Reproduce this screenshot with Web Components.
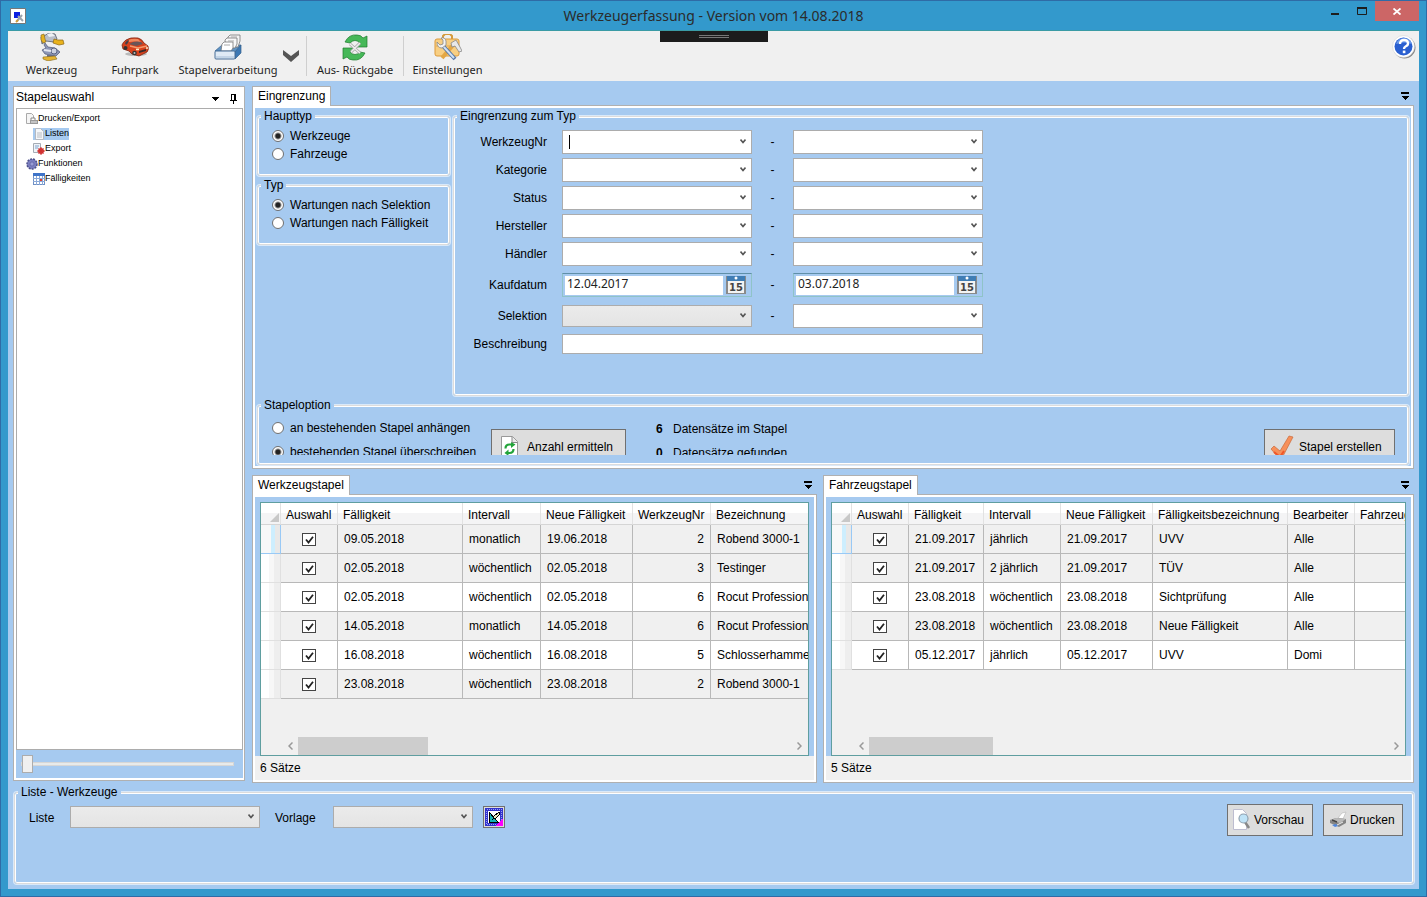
<!DOCTYPE html>
<html lang="de">
<head>
<meta charset="utf-8">
<title>Werkzeugerfassung</title>
<style>
  html, body { margin: 0; min-height: 100%; }
  body { font: 12px/14px "Liberation Sans", Arial, sans-serif; color: #000; background: #3399cc; }
  .main { flex: 1; display: grid; grid-template-columns: 232px minmax(0, 1fr); gap: 7px; }
  .side { margin-bottom: 2px; }
  .right { display: flex; flex-direction: column; gap: 6px; min-width: 0; }
  .stacks { flex: 1; display: grid; grid-template-columns: minmax(0, 565fr) minmax(0, 591fr); gap: 6px; }
  .filter { display: flex; flex-direction: column; gap: 2px; padding: 1px 2px 1px 2px; }
  .filter-top { display: grid; grid-template-columns: 193px minmax(0, 1fr); gap: 3px; }
  .types { display: flex; flex-direction: column; gap: 2px; }
  .types group-box { --pad: 4px 14px 12px; }
  .criteria { --pad: 7px 0 39px 2px; }
  .option { --pad: 0 0 9px 14px; }
  .list { --pad: 5px 10px 47px 14px; margin: 2px 0 0 1px; }
</style>
</head>
<body>
<app-window caption="Werkzeugerfassung - Version vom 14.08.2018">
  <tool-bar slot="toolbar"></tool-bar>
  <div class="main">
    <stack-tree class="side"></stack-tree>
    <div class="right">
      <dock-panel caption="Eingrenzung">
        <div class="filter">
          <div class="filter-top">
            <div class="types">
              <group-box caption="Haupttyp"><radio-set name="haupttyp" options="Werkzeuge|Fahrzeuge" selected="0"></radio-set></group-box>
              <group-box caption="Typ"><radio-set name="typ" options="Wartungen nach Selektion|Wartungen nach Fälligkeit" selected="0"></radio-set></group-box>
            </div>
            <group-box class="criteria" caption="Eingrenzung zum Typ"><criteria-form></criteria-form></group-box>
          </div>
          <group-box class="option" caption="Stapeloption"><stack-options></stack-options></group-box>
        </div>
      </dock-panel>
      <div class="stacks">
        <dock-panel caption="Werkzeugstapel"><data-grid source="tools"></data-grid></dock-panel>
        <dock-panel caption="Fahrzeugstapel"><data-grid source="vehicles"></data-grid></dock-panel>
      </div>
    </div>
  </div>
  <group-box class="list" caption="Liste - Werkzeuge"><list-actions></list-actions></group-box>
</app-window>

<script>
const ICONS = {
  app: `<svg width="16" height="16" viewBox="0 0 16 16"><path d="M.5.5h15v15H.5z" fill="#fff" stroke="#777"/><path d="M4 4h6v4H8v2H4z" fill="#0a1ee0"/><path d="M7 13l5-6M8 8l5 5" stroke="#9aa3ad" stroke-width="2"/><path d="M6 14l2-2" stroke="#d29a35" stroke-width="2"/></svg>`,
  drill: `<svg width="28" height="28" viewBox="0 0 28 28"><path d="M6 3l5-3 6 1 2 5-3 3-8-1-4 3-1-7z" fill="#b9bec9" stroke="#555c6b" stroke-width=".8"/><path d="M3 2l3-1 1 5 1 3-3 1-2-3z" fill="#e7b321" stroke="#7d6320" stroke-width=".6"/><path d="M9 1l5-1 3 3-6 1z" fill="#eef1f5"/><path d="M16 6l4 1 5 0 1 4-5 1-6-2z" fill="#e9b21c" stroke="#8b6515" stroke-width=".7"/><path d="M7 10l3 4 7 1 5 4-4 4-11-2-3-4 4-2-2-3z" fill="#8e98b8" stroke="#4f5875" stroke-width=".7"/><circle cx="16" cy="18" r="3" fill="#cdd2e2" stroke="#5b6483"/><path d="M6 17l7 1" stroke="#e3e6f0" stroke-width="2"/><path d="M9 22h7v2h-7z" fill="#687090"/><path d="M5 24l12-1 2 3-9 2-5-2z" fill="#e5b331" stroke="#856820" stroke-width=".6"/></svg>`,
  car: `<svg width="28" height="20" viewBox="0 0 28 20"><ellipse cx="15" cy="17" rx="11" ry="2" fill="#b9b9b9"/><path d="M1 8q1-3 4-5 4-3 12-2 4 1 6 5l4 3q1 4-1 6l-8 4-7-2-3-3-6-2z" fill="#d8421d" stroke="#7c2412" stroke-width=".8"/><path d="M7 3q5-2 10-1l3 3q-7-1-12 0z" fill="#f0895f"/><path d="M8 7l4-2q4-1 8 0l2 2-7 2z" fill="#6a5558"/><path d="M4 6q2-3 4-3l-1 3-2 2z" fill="#44404a"/><path d="M9 9l8 2 9-2" stroke="#f59a6c" stroke-width="1.500" fill="none"/><path d="M18 14l7-2v2l-7 2z" fill="#3a2a2a"/><circle cx="4.500" cy="11" r="2" fill="#333"/><circle cx="13.500" cy="16" r="2.300" fill="#333"/><circle cx="13.500" cy="16" r="1" fill="#bbb"/><path d="M15 12.500l3 0M25 11l2 0" stroke="#ffe9c7" stroke-width="1.500"/></svg>`,
  tray: `<svg width="28" height="27" viewBox="0 0 28 27"><path d="M1 17l7-6h19l-6 7z" fill="#5f93c4" stroke="#3a6490" stroke-width=".7"/><path d="M21 18l6-7v8l-6 6z" fill="#3c78b4" stroke="#38638c" stroke-width=".7"/><path d="M14 3l2-2h10v6l-2 6H13z" fill="#f4f4f4" stroke="#777" stroke-width=".8"/><path d="M11 6l2-2h10v6l-2 4h-9z" fill="#f8f8f8" stroke="#777" stroke-width=".8"/><path d="M8 10l2-2h9v6l-2 3H7z" fill="#fff" stroke="#777" stroke-width=".8"/><path d="M10 11h6M14 7h6M17 3h6" stroke="#aaa"/><rect x="1" y="17" width="20" height="8" rx="1" fill="#dfeaf5" stroke="#466d96"/><path d="M2 23h18" stroke="#a7bfd8"/></svg>`,
  chevron: `<svg width="16" height="12" viewBox="0 0 16 12"><path d="M0 0l8 6 8-6v5l-8 7-8-7z" fill="#555"/></svg>`,
  exchange: `<svg width="26" height="27" viewBox="0 0 26 27"><path d="M3 8Q7 0 15 1q4 0 6 3l4-2v11H14l4-4q-5-5-10 0z" fill="#46b858" stroke="#1d7a2d" stroke-width=".7"/><path d="M23 19q-4 8-12 7-4 0-6-3l-4 2V14h11l-4 4q5 5 10 0z" fill="#46b858" stroke="#1d7a2d" stroke-width=".7"/><path d="M8 10l10 9M18 9L9 18" stroke="#a5a5a5" stroke-width="3"/><path d="M8 10l10 9M18 9L9 18" stroke="#eee" stroke-width="1.500"/></svg>`,
  toolbox: `<svg width="28" height="27" viewBox="0 0 28 27"><path d="M9 5V2l2-2h5l2 2v3" fill="none" stroke="#d59a3c" stroke-width="2"/><rect x="1" y="5" width="24" height="17" rx="2" fill="#f8cf83" stroke="#dc9a3b"/><path d="M2 12h22" stroke="#e1a750"/><path d="M8 24l12-14" stroke="#e3a744" stroke-width="4"/><path d="M17 9l5-3 4 7 2 4-3 1-4-6-3 1z" fill="#e8e8e8" stroke="#888" stroke-width=".8"/><path d="M9 12l12 13" stroke="#5577a8" stroke-width="4"/><path d="M9 12l11 12" stroke="#cfe0f4" stroke-width="2"/><path d="M3 8l3 3 3-1V6L7 4q4-1 5 3v4l-4 3q-5 0-5-6z" fill="#f2f2f2" stroke="#888" stroke-width=".8"/></svg>`,
  help: `<svg width="24" height="24" viewBox="0 0 24 24"><circle cx="12.500" cy="12.500" r="11" fill="#888"/><circle cx="11.500" cy="11.500" r="11" fill="#fff" stroke="#ccc" stroke-width=".5"/><circle cx="11.500" cy="11.500" r="9" fill="#2a5fd0"/><path d="M4 9q2-6 8-6 6 0 8 6-8-3-16 0z" fill="#6c9bea"/><path d="M8 9q0-4 4-4t4 3.500q0 2-2.500 3-1.500.700-1.500 2.500" fill="none" stroke="#fff" stroke-width="2.400"/><rect x="10.800" y="15.600" width="2.600" height="2.600" fill="#fff"/></svg>`,
  options: `<svg width="8" height="8" viewBox="0 0 8 8" shape-rendering="crispEdges"><path d="M0 0h8v2H0zM0 4h8L4 8z"/></svg>`,
  triangle: `<svg width="8" height="4" viewBox="0 0 8 4" shape-rendering="crispEdges"><path d="M0 0h8L4 4z"/></svg>`,
  pin: `<svg width="7" height="10" viewBox="0 0 7 10" shape-rendering="crispEdges"><path d="M1 0h5v6h1v1H4v3H3V7H0V6h1zM2 1v5h2V1z" fill-rule="evenodd"/></svg>`,
  down: `<svg width="6" height="5" viewBox="0 0 6 5"><path d="M.5.5L3 3.500 5.500.5" fill="none" stroke="#555" stroke-width="1.600"/></svg>`,
  left: `<svg width="5" height="8" viewBox="0 0 5 8"><path d="M4.500.5L1 4l3.500 3.500" fill="none" stroke="#999" stroke-width="1.500"/></svg>`,
  right: `<svg width="5" height="8" viewBox="0 0 5 8"><path d="M.5.5L4 4 .5 7.500" fill="none" stroke="#999" stroke-width="1.500"/></svg>`,
  printexport: `<svg width="12" height="12" viewBox="0 0 12 12"><path d="M.5.5h5l2 2v8h-7z" fill="#f5f5f5" stroke="#aaa"/><path d="M5 5h4v3H5z" fill="#fff" stroke="#888"/><rect x="4" y="7" width="8" height="4" fill="#999"/><path d="M5 9h6" stroke="#eee"/></svg>`,
  page: `<svg width="12" height="12" viewBox="0 0 12 12"><path d="M2.500.5h5l3 3v8h-8z" fill="#f4f7fa" stroke="#b5b9c0"/><path d="M4 5h5M4 7h5M4 9h5" stroke="#b9bcc2"/></svg>`,
  exportdoc: `<svg width="12" height="12" viewBox="0 0 12 12"><path d="M.5.5h7v9h-7z" fill="#eff3f8" stroke="#a5acb5"/><path d="M2 3h4M2 5h3" stroke="#7fa3cc"/><circle cx="8" cy="8" r="3" fill="#d63a3a"/><path d="M8 4v8M4 8h8M5.500 5.500l5 5M10.500 5.500l-5 5" stroke="#cf2f2f"/></svg>`,
  gear: `<svg width="12" height="12" viewBox="0 0 12 12"><circle cx="6" cy="6" r="5" fill="#7a7ec0" stroke="#4c4f8a" stroke-width="1.500" stroke-dasharray="2 1"/><circle cx="6" cy="6" r="2" fill="#9a9ed6" stroke="#5b5e9c" stroke-width=".6"/></svg>`,
  calendar: `<svg width="12" height="12" viewBox="0 0 12 12"><rect x=".5" y=".5" width="11" height="11" fill="#fff" stroke="#6f90c4"/><path d="M0 0h12v3H0z" fill="#3f74c8"/><path d="M0 5.500h12M0 8.500h12M3.500 3v9M6.500 3v9M9.500 3v9" stroke="#8aa9d8"/><path d="M7 6h2v2H7z" fill="#e03c2d"/></svg>`,
  refreshdoc: `<svg width="18" height="22" viewBox="0 0 18 22"><path d="M.5.5h11l5 5v16H.5z" fill="#fff" stroke="#999"/><path d="M11 .5v6h5.500" fill="#e8e8e8" stroke="#888"/><path d="M4.500 12.500q0-4 4-4h3" fill="none" stroke="#23a43a" stroke-width="2.200"/><path d="M10 6l4.500 2.500L10 12z" fill="#23a43a"/><path d="M12.500 13q0 4-4 4h-2" fill="none" stroke="#23a43a" stroke-width="2.200"/><path d="M7.500 13.500L3.500 17l4 3z" fill="#23a43a"/></svg>`,
  check: `<svg width="24" height="24" viewBox="0 0 24 24"><path d="M1 14l3-3 6 5L19 1l4 1-11 21H9z" fill="#f7905a" stroke="#c96a3b" stroke-width=".7"/><path d="M4 17l6 5 4-6" fill="none" stroke="#f0582a" stroke-width="2"/></svg>`,
  preview: `<svg width="18" height="22" viewBox="0 0 18 22"><path d="M.5.5h9l4 4v16H.5z" fill="#fff" stroke="#bdbdd0"/><path d="M12 13l4 6" stroke="#888" stroke-width="2.500"/><circle cx="10.500" cy="9.500" r="4.500" fill="#bfe3f7" stroke="#8fa0ae" stroke-width="1.200"/></svg>`,
  printer: `<svg width="18" height="18" viewBox="0 0 18 18"><path d="M9 7l4-5 4-1-3 7z" fill="#fff" stroke="#bbb" stroke-width=".7"/><path d="M1 9l6-2 10 1v4l-7 4-9-4z" fill="#858585"/><path d="M1 9l6-2 10 1-6 4z" fill="#b9b9b9"/><path d="M3 9l5 2" stroke="#444" stroke-width="1.500"/><path d="M3 14l4-1 2 2-3 1z" fill="#4f86dd"/><path d="M8 14l6-3" stroke="#eee"/></svg>`,
  design: `<svg width="18" height="18" viewBox="0 0 18 18" shape-rendering="crispEdges"><path d="M0 0h18v18H0z" fill="#3333cc"/><path d="M1.500 1.500h15v15h-15z" fill="none" stroke="#9aa0f0" stroke-dasharray="1 1"/><path d="M3 3h12v12H3z" fill="#fff"/><path d="M4 4v10h9z" fill="#12b5b5" stroke="#000"/><path d="M14 4L9 8l-1 3 3-1 4-4z" fill="#e9e9c0" stroke="#000"/><path d="M18 10v8h-8z" fill="#f0f"/></svg>`,
  date: `<svg width="20" height="18" viewBox="0 0 20 18"><path d="M0 0h20v18H0z" fill="#8a8a8a"/><path d="M1 0h18v5H1z" fill="#3f7db5"/><path d="M2 5h16v12H2z" fill="#f3f3f3"/><circle cx="10" cy="2" r="1.500" fill="#fff"/><text x="10" y="15" text-anchor="middle" font-family="DejaVu Sans, sans-serif" font-size="10" font-weight="bold" fill="#444">15</text></svg>`
};

const BASE = `*{box-sizing:border-box}button,input,select{font:inherit;color:inherit;margin:0}svg{display:block;flex:none}`;

class UiElement extends HTMLElement {
  connectedCallback() {
    if (this.shadowRoot) return;
    this.attachShadow({ mode: "open" });
    this.shadowRoot.innerHTML = `<style>${BASE}${this.css()}</style>${this.markup()}`;
  }
  css() { return ""; }
  markup() { return ""; }
}

const combo = (id, { label = "", disabled = false, caret = false } = {}) =>
  `<span class="combo${disabled ? " off" : ""}${caret ? " caret" : ""}"><select id="${id}"${label ? ` aria-label="${label}"` : ""}${disabled ? " disabled" : ""}><option></option></select>${ICONS.down}</span>`;
const COMBO_CSS = `
  .combo{position:relative;display:block;height:24px}
  .combo.off{height:22px}
  .combo select{appearance:none;display:block;width:100%;height:100%;border:1px solid #acacac;border-radius:0;background:#fff;padding:0 20px 0 4px;outline:0}
  .combo.off select{background:linear-gradient(#ebebeb,#e4e4e4);opacity:1}
  .combo svg{position:absolute;right:6px;top:9px;pointer-events:none}
  .combo.off svg{top:8px}
  .combo.caret::before{content:"";position:absolute;left:7px;top:5px;width:1px;height:14px;background:#000}`;
const BUTTON_CSS = `
  .btn{display:flex;align-items:center;background:#dddddd;border:1px solid #707070;border-radius:0;white-space:nowrap}`;

customElements.define("app-window", class extends UiElement {
  css() { return `
    :host{display:flex;flex-direction:column;min-height:100vh;box-sizing:border-box;border:1px solid #2f6ba6;background:#3399cc;padding:0 7px 7px}
    header{display:grid;grid-template-columns:1fr auto 1fr;align-items:start;height:29px}
    .icon{margin:7px 0 0 2px}
    h1{margin:5px 0 0;font:14px/20px "Noto Sans","Open Sans",sans-serif;color:#2b2b2b;white-space:nowrap}
    nav{display:flex;justify-content:flex-end}
    nav button{border:0;background:none;padding:0;height:20px;width:27px;display:grid;place-items:center}
    nav .close{width:44px;background:#cc6666}
    .client{flex:1;display:flex;flex-direction:column;background:#a6caf0;border-top:1px solid #3a9ba5}
    .body{flex:1;display:flex;flex-direction:column;padding:5px}
    .grip{position:absolute;left:50%;top:31px;margin-left:-54px;width:108px;height:11px;background:#1c1c1c;padding:4px 39px}
    .grip i{display:block;height:3px;border:1px solid #777;border-width:1px 0}`; }
  markup() { return `
    <header><span class="icon">${ICONS.app}</span><h1>${this.getAttribute("caption")}</h1>
      <nav>
        <button aria-label="Minimieren"><svg width="8" height="8"><path d="M0 6h8v2H0z" fill="#1d1d1d"/></svg></button>
        <button aria-label="Maximieren"><svg width="10" height="8"><path d="M.5 1v6.500h9V1" fill="none" stroke="#1d1d1d"/><path d="M0 0h10v2H0z" fill="#1d1d1d"/></svg></button>
        <button class="close" aria-label="Schließen"><svg width="8" height="7" viewBox="0 0 8 7"><path d="M.5.5l7 6M7.500.5l-7 6" stroke="#fff" stroke-width="1.800"/></svg></button>
      </nav></header>
    <div class="client"><slot name="toolbar"></slot><div class="body"><slot></slot></div></div>
    <div class="grip"><i></i></div>`; }
});

customElements.define("tool-bar", class extends UiElement {
  css() { return `
    :host{display:flex;height:50px;background:#f0f0f0;font:11px/16px "Noto Sans","Open Sans",sans-serif;color:#1e1e1e}
    button{border:0;background:none;padding:2px 0 0;display:flex;flex-direction:column;align-items:center;gap:1px;white-space:nowrap}
    .pic{height:28px;display:grid;place-items:center}
    .w80{width:80px}.w87{width:87px}.w96{width:96px}.w106{width:106px}
    .more{width:20px;padding-top:19px}
    hr{margin:5px 0;border:0;width:1px;background:#cfcfcf}
    .gap{margin-left:5px}
    .help{margin-left:auto;margin-right:3px;padding-top:4px}`; }
  markup() {
    const tool = (icon, text, width) => `<button class="${width}"><span class="pic">${ICONS[icon]}</span>${text}</button>`;
    return tool("drill", "Werkzeug", "w87") + tool("car", "Fuhrpark", "w80") + tool("tray", "Stapelverarbeitung", "w106")
      + `<button class="more" aria-label="Mehr">${ICONS.chevron}</button><hr class="gap">`
      + tool("exchange", "Aus- Rückgabe", "w96") + "<hr>" + tool("toolbox", "Einstellungen", "w87")
      + `<button class="help" aria-label="Hilfe">${ICONS.help}</button>`;
  }
});

customElements.define("stack-tree", class extends UiElement {
  css() { return `
    :host{display:flex;flex-direction:column;box-sizing:border-box;border:1px solid #b0b0b0;background:#fff;padding:0 1px 2px 2px}
    header{display:flex;align-items:center;height:21px}
    header span{flex:1;padding-bottom:2px}
    header button{border:0;background:none;padding:3px 0 0;width:19px;display:grid;place-items:center}
    ul{list-style:none;margin:0;padding:0}
    .tree{flex:1;border:1px solid #acacac;padding:2px 0 0 9px;font-size:9px;line-height:11px}
    .tree ul{padding-left:7px}
    .node{display:flex;align-items:center;height:15px}
    .node a{display:flex;align-items:center;color:inherit;text-decoration:none}
    .node a[aria-current]{background:#a6caf0}
    .zoom{background:#a6caf0;padding:4px 9px 4px 5px}
    input{appearance:none;display:block;width:100%;height:20px;background:none}
    input::-webkit-slider-runnable-track{height:4px;background:#e7eaea;border:1px solid #d6d6d6}
    input::-webkit-slider-thumb{appearance:none;width:11px;height:18px;margin-top:-8px;background:#f0f0f0;border:1px solid #acacac}`; }
  markup() {
    const node = (icon, text, current) => `<div class="node"><a href="#"${current ? ' aria-current="page"' : ""}>${ICONS[icon]}<span>${text}</span></a></div>`;
    return `<header><span>Stapelauswahl</span><button aria-label="Menü">${ICONS.triangle}</button><button aria-label="Anheften">${ICONS.pin}</button></header>
      <ul class="tree">
        <li>${node("printexport", "Drucken/Export")}<ul><li>${node("page", "Listen", true)}</li><li>${node("exportdoc", "Export")}</li></ul></li>
        <li>${node("gear", "Funktionen")}<ul><li>${node("calendar", "Fälligkeiten")}</li></ul></li>
      </ul>
      <div class="zoom"><input type="range" min="0" max="100" value="0" aria-label="Zoom"></div>`;
  }
});

customElements.define("dock-panel", class extends UiElement {
  css() { return `
    :host{display:flex;flex-direction:column;min-width:0}
    .tabs{display:flex;justify-content:space-between;align-items:flex-end}
    .tab{position:relative;height:20px;margin-bottom:-1px;background:#fff;border:1px solid #b0b0b0;border-bottom:0;padding:2px 5px 0}
    .opt{border:0;background:none;padding:0 5px 5px}
    .panel{flex:1;border:1px solid #b0b0b0;background:#fff;padding:2px;display:flex;flex-direction:column}
    .content{flex:1;background:#a6caf0;display:flex;flex-direction:column}
    ::slotted(*){flex:1}`; }
  markup() { return `
    <div class="tabs"><span class="tab">${this.getAttribute("caption")}</span><button class="opt" aria-label="Fensterliste">${ICONS.options}</button></div>
    <div class="panel"><div class="content"><slot></slot></div></div>`; }
});

customElements.define("group-box", class extends UiElement {
  css() { return `
    :host{display:grid;min-width:0}
    fieldset{margin:0;padding:0;min-width:0;border:1px solid #dcdcdc;border-radius:3px;box-shadow:0 0 0 1px #d9e9fa,inset 0 0 0 1px #fff}
    legend{position:relative;margin-left:3px;padding:0 3px;background:#a6caf0}
    div{padding:var(--pad,0)}`; }
  markup() { return `<fieldset><legend>${this.getAttribute("caption")}</legend><div><slot></slot></div></fieldset>`; }
});

const RADIO_CSS = `
  .radio{display:flex;align-items:center;gap:6px;white-space:nowrap}
  .radio input{appearance:none;width:12px;height:12px;border:1px solid #707070;border-radius:50%;background:#fff}
  .radio input:checked{background:radial-gradient(circle,#222 0 2px,#fff 4px)}`;
const radios = (name, options, selected) => options.map((text, i) =>
  `<label class="radio"><input type="radio" name="${name}"${i === selected ? " checked" : ""}>${text}</label>`).join("");

customElements.define("radio-set", class extends UiElement {
  css() { return `:host{display:block}${RADIO_CSS}.radio{height:18px}`; }
  markup() { return radios(this.getAttribute("name"), this.getAttribute("options").split("|"), Number(this.getAttribute("selected"))); }
});

customElements.define("criteria-form", class extends UiElement {
  css() { return `
    :host{display:block}
    form{display:grid;grid-template-columns:91px 190px 11px 190px;column-gap:15px;row-gap:4px;align-items:center}
    form>label{text-align:right}
    .dash{text-align:center}
    .date{display:flex;align-items:center;height:24px;border:1px solid #8fc3c8;border-top-color:#5f8fa8;padding:1px 5px 1px 2px;gap:3px;margin:3px 0}
    .date input{flex:1;min-width:0;width:0;height:19px;border:0;padding:0 0 3px 2px;background:#fff;color:#222;font:12px/16px "Noto Sans","Open Sans",sans-serif}
    .date button{border:0;padding:0;background:none}
    .desc{grid-column:2 / 5;height:20px;border:1px solid #acacac;padding:0 4px;margin:2px 0}
    ${COMBO_CSS}`; }
  markup() {
    const row = (id, text, from, to) => `<label for="${id}">${text}</label>${from}<span class="dash">-</span>${to}`;
    const range = (id, text, first = {}) => row(id, text, combo(id, first), combo(id + "-bis", { label: text + " bis" }));
    const date = (id, value, label) => `<span class="date"><input id="${id}" type="text" value="${value}"${label ? ` aria-label="${label}"` : ""}><button type="button" aria-label="Kalender">${ICONS.date}</button></span>`;
    return `<form>${range("nr", "WerkzeugNr", { caret: true })}${range("kategorie", "Kategorie")}${range("status", "Status")}
      ${range("hersteller", "Hersteller")}${range("haendler", "Händler")}
      ${row("kauf", "Kaufdatum", date("kauf", "12.04.2017"), date("kauf-bis", "03.07.2018", "Kaufdatum bis"))}
      ${range("selektion", "Selektion", { disabled: true })}
      <label for="beschreibung">Beschreibung</label><input class="desc" id="beschreibung" type="text"></form>`;
  }
});

customElements.define("stack-options", class extends UiElement {
  css() { return `
    :host{display:flex;height:43px;overflow:hidden;align-items:flex-start}
    ${RADIO_CSS}${BUTTON_CSS}
    .set{width:219px;padding-top:4px}
    .radio{height:24px}
    .btn{height:36px;margin-top:17px}
    .count{width:135px;padding:0 9px;gap:8px}
    .create{width:131px;padding:0 5px;gap:5px;margin-left:auto;margin-right:13px}
    dl{margin:5px 0 0 30px;display:grid;grid-template-columns:7px auto;column-gap:10px;line-height:24px}
    dt{font-weight:bold}dd{margin:0}`; }
  markup() { return `
    <div class="set">${radios("option", ["an bestehenden Stapel anhängen", "bestehenden Stapel überschreiben"], 1)}</div>
    <button class="btn count">${ICONS.refreshdoc}Anzahl ermitteln</button>
    <dl><dt>6</dt><dd>Datensätze im Stapel</dd><dt>0</dt><dd>Datensätze gefunden</dd></dl>
    <button class="btn create">${ICONS.check}Stapel erstellen</button>`; }
});

const GRIDS = {
  tools: {
    thumb: 130,
    columns: [["Auswahl", 57], ["Fälligkeit", 125], ["Intervall", 78], ["Neue Fälligkeit", 92], ["WerkzeugNr", 78, "num"], ["Bezeichnung", 160]],
    rows: [
      ["09.05.2018", "monatlich", "19.06.2018", "2", "Robend 3000-1"],
      ["02.05.2018", "wöchentlich", "02.05.2018", "3", "Testinger"],
      ["02.05.2018", "wöchentlich", "02.05.2018", "6", "Rocut Professional"],
      ["14.05.2018", "monatlich", "14.05.2018", "6", "Rocut Professional"],
      ["16.08.2018", "wöchentlich", "16.08.2018", "5", "Schlosserhammer"],
      ["23.08.2018", "wöchentlich", "23.08.2018", "2", "Robend 3000-1"]
    ]
  },
  vehicles: {
    thumb: 124,
    columns: [["Auswahl", 57], ["Fälligkeit", 75], ["Intervall", 77], ["Neue Fälligkeit", 92], ["Fälligkeitsbezeichnung", 135], ["Bearbeiter", 67], ["Fahrzeug", 100]],
    rows: [
      ["21.09.2017", "jährlich", "21.09.2017", "UVV", "Alle", ""],
      ["21.09.2017", "2 jährlich", "21.09.2017", "TÜV", "Alle", ""],
      ["23.08.2018", "wöchentlich", "23.08.2018", "Sichtprüfung", "Alle", ""],
      ["23.08.2018", "wöchentlich", "23.08.2018", "Neue Fälligkeit", "Alle", ""],
      ["05.12.2017", "jährlich", "05.12.2017", "UVV", "Domi", ""]
    ]
  }
};

customElements.define("data-grid", class extends UiElement {
  css() { return `
    :host{display:flex;flex-direction:column;min-width:0}
    .frame{flex:1;margin:5px 5px 0;border:1px solid #5f9ea0;background:#f0f0f0;display:flex;flex-direction:column;min-width:0}
    .view{flex:1;overflow:hidden}
    table{table-layout:fixed;border-collapse:separate;border-spacing:0;width:0}
    th,td{padding:0;overflow:hidden;white-space:nowrap;text-align:left;font-weight:normal}
    thead th{height:22px;padding:2px 0 0 5px;border-right:1px solid #e2e2e2;border-bottom:1px solid #d5d5d5;background:linear-gradient(#fff 50%,#f4f4f5 50%)}
    td{height:29px;padding:0 6px;border:1px solid #b8b8b8;border-width:0 1px 1px 0;background:#fff}
    tr:nth-child(even) td,tr:first-child td{background:#f0f0f0}
    td.num{text-align:right}
    td.pick{padding:0}
    tbody th{border:1px solid #e0e0e0;border-width:0 1px 1px 0;background:linear-gradient(90deg,#fff 8px,#f7f7f7 8px 13px,#eee 13px)}
    tbody tr:first-child th{border-color:#99c9f5;background:linear-gradient(90deg,#f8f8f8 10px,#cdeefe 10px 14px,#e8e8e8 14px)}
    thead th:first-child{padding:6px 0 0 8px}
    td.pick input{appearance:none;display:block;margin:0 auto;width:14px;height:13px;border:1px solid #444;background:#fff}
    td.pick label{position:relative;display:block}
    td.pick svg{position:absolute;left:50%;top:3px;margin-left:-4px}
    .bar{display:flex;align-items:center;height:18px;padding:0 3px 0 22px}
    .bar button{border:0;background:none;padding:0;width:15px;display:grid;place-items:center}
    .thumb{height:18px;background:#cdcdcd}
    .bar button:last-child{margin-left:auto;width:12px}
    footer{height:24px;background:#f0f0f0;padding:5px 5px 0}`; }
  markup() {
    const grid = GRIDS[this.getAttribute("source")];
    const tick = `<svg width="9" height="8" viewBox="0 0 9 8"><path d="M1 3.500l2.500 3L8 .8" fill="none" stroke="#222" stroke-width="1.800"/></svg>`;
    return `<div class="frame"><div class="view"><table>
      <colgroup><col style="width:20px">${grid.columns.map(c => `<col style="width:${c[1]}px">`).join("")}</colgroup>
      <thead><tr><th><svg width="10" height="10"><path d="M10 1v9H1z" fill="#c8c8c8"/></svg></th>${grid.columns.map(c => `<th scope="col">${c[0]}</th>`).join("")}</tr></thead>
      <tbody>${grid.rows.map((cells, r) => `<tr><th></th><td class="pick"><label><input type="checkbox" checked aria-label="Zeile ${r + 1}">${tick}</label></td>${cells.map((text, i) => `<td class="${grid.columns[i + 1][2] || ""}">${text}</td>`).join("")}</tr>`).join("")}</tbody>
      </table></div>
      <div class="bar"><button aria-label="Nach links">${ICONS.left}</button><div class="thumb" style="width:${grid.thumb}px"></div><button aria-label="Nach rechts">${ICONS.right}</button></div></div>
      <footer>${grid.rows.length} Sätze</footer>`;
  }
});

customElements.define("list-actions", class extends UiElement {
  css() { return `
    :host{display:flex;justify-content:space-between;align-items:flex-start}
    ${COMBO_CSS}${BUTTON_CSS}
    .fields{display:flex;align-items:center;padding-top:2px}
    .fields .combo{width:190px;margin-right:15px}
    .fields .combo.narrow{width:140px;margin-right:10px}
    label{width:41px;padding-top:2px}
    label.wide{width:58px}
    .design{width:22px;height:22px;padding:1px}
    .actions{display:flex;gap:10px}
    .actions .btn{width:86px;height:32px;padding:0 5px;gap:3px}
    .actions .print{width:80px}`; }
  markup() { return `
    <div class="fields">
      <label for="liste">Liste</label>${combo("liste", { disabled: true })}
      <label class="wide" for="vorlage">Vorlage</label>${combo("vorlage", { disabled: true }).replace("combo off", "combo off narrow")}
      <button class="btn design" aria-label="Vorlage bearbeiten">${ICONS.design}</button>
    </div>
    <div class="actions"><button class="btn">${ICONS.preview}Vorschau</button><button class="btn print">${ICONS.printer}Drucken</button></div>`; }
});
</script>
</body>
</html>
